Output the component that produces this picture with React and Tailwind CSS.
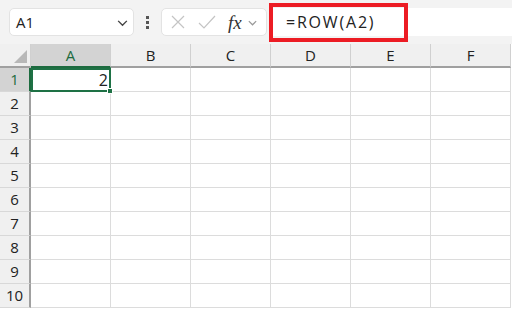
import React from "react";

const cols = ["A", "B", "C", "D", "E", "F"];
const rows = [1, 2, 3, 4, 5, 6, 7, 8, 9, 10];

const Chevron = ({ className }) => (
  <svg className={className} viewBox="0 0 12 12" fill="none" stroke="currentColor" strokeWidth="1.3">
    <path d="M2 4.5 L6 8.5 L10 4.5" />
  </svg>
);

const App = () => {
  return (
    <div
      className="w-[512px] h-[310px] overflow-hidden bg-white text-[#222]"
      style={{ fontFamily: "'Open Sans', 'Liberation Sans', sans-serif" }}
    >
      {/* formula bar */}
      <div className="relative h-[44px] bg-[#f3f3f3] flex items-center pl-[9px]">
        <div className="w-[125px] h-[28px] bg-white rounded-[5px] border border-[#e3e3e3] flex items-center justify-between pl-[6px] pr-[4px]">
          <span className="text-[15px]">A1</span>
          <Chevron className="w-[13px] h-[13px] text-[#444]" />
        </div>
        <div className="w-[27px] flex flex-col items-center gap-[2px]">
          <span className="w-[3px] h-[3px] bg-[#555]" />
          <span className="w-[3px] h-[3px] bg-[#555]" />
          <span className="w-[3px] h-[3px] bg-[#555]" />
        </div>
        <div className="w-[106px] h-[28px] bg-white rounded-[5px] border border-[#e3e3e3] flex items-center pl-[8px] pr-[2px]">
          <svg className="w-[16px] h-[16px] text-[#c4c4c4]" viewBox="0 0 16 16" stroke="currentColor" strokeWidth="1.2">
            <path d="M2 2 L14 14 M14 2 L2 14" />
          </svg>
          <svg className="ml-[12px] w-[18px] h-[16px] text-[#c4c4c4]" viewBox="0 0 18 16" fill="none" stroke="currentColor" strokeWidth="1.2">
            <path d="M1 9 L6 14 L17 2" />
          </svg>
          <span
            className="ml-[12px] text-[19px] italic leading-none text-[#333]"
            style={{ fontFamily: "'Liberation Serif', 'DejaVu Serif', serif" }}
          >
            fx
          </span>
          <Chevron className="ml-[5px] w-[11px] h-[11px] text-[#999]" />
        </div>
        <div className="ml-[3px] flex-1 h-[28px] bg-white flex items-center pl-[16px]">
          <span className="text-[16px] tracking-[1.8px]">=ROW(A2)</span>
        </div>
        <div className="absolute left-[269px] top-[3px] w-[139px] h-[39px] border-[4px] border-[#ec1c24]" />
      </div>

      {/* grid */}
      <div className="grid grid-cols-[31px_repeat(6,80px)] text-[15px]">
        <div className="h-[24px] bg-[#f0f0f0] border-r border-[#d0d0d0] border-b-2 border-b-[#a0a0a0] relative">
          <div className="absolute right-[3px] bottom-[3px] w-0 h-0 border-l-[13px] border-l-transparent border-b-[13px] border-b-[#b8b8b8]" />
        </div>
        {cols.map((c) => (
          <div
            key={c}
            className={`h-[24px] flex items-center justify-center border-r border-[#d0d0d0] border-b-2 ${
              c === "A" ? "bg-[#d3d3d3] text-[#1d6b3f] border-b-[#1d6b3f]" : "bg-[#f0f0f0] text-[#222] border-b-[#a0a0a0]"
            }`}
          >
            {c}
          </div>
        ))}
        {rows.map((r) => (
          <React.Fragment key={r}>
            <div
              className={`h-[24px] flex items-center justify-center border-b border-[#d8d8d8] border-r-2 ${
                r === 1 ? "bg-[#d3d3d3] text-[#1d6b3f] border-r-[#1d6b3f]" : "bg-[#f0f0f0] text-[#222] border-r-[#a0a0a0]"
              }`}
            >
              {r}
            </div>
            {cols.map((c) =>
              r === 1 && c === "A" ? (
                <div key={c} className="relative h-[24px] border-2 border-[#1e7145] flex items-center justify-end pr-[1px]">
                  <span className="text-[16px]">2</span>
                  <div className="absolute -right-[4px] -bottom-[4px] w-[6px] h-[6px] bg-[#1e7145] border border-white" />
                </div>
              ) : (
                <div key={c} className="h-[24px] border-r border-b border-[#dcdcdc]" />
              )
            )}
          </React.Fragment>
        ))}
      </div>
    </div>
  );
};

export default App;
